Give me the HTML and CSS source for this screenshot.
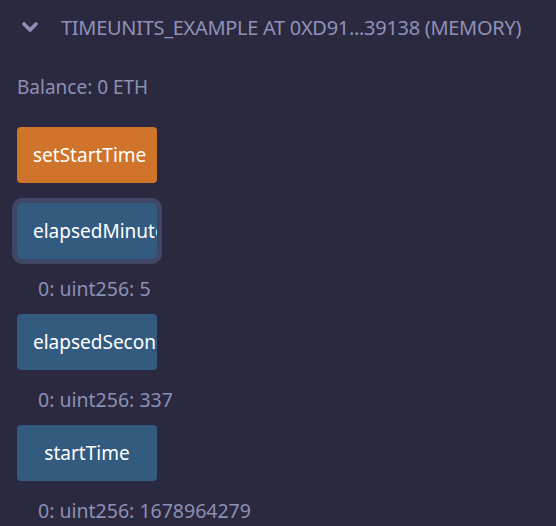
FILE: index.html
```html
<!DOCTYPE html>
<html>
<head>
<meta charset="utf-8">
<link rel="stylesheet" href="styles.css">
</head>
<body>
<div class="panel">
  <div class="header">
    <svg class="chev" width="18" height="14" viewBox="0 0 18 14"><path d="M3 4 L9 10 L15 4" fill="none" stroke="#8e90b8" stroke-width="3.6" stroke-linecap="round" stroke-linejoin="round"/></svg>
    <span class="title">TIMEUNITS_EXAMPLE AT 0XD91...39138 (MEMORY)</span>
  </div>
  <div class="balance">Balance: 0 ETH</div>
  <div class="fn first"><button class="btn orange">setStartTime</button></div>
  <div class="fn after-fn"><button class="btn blue focus">elapsedMinutes</button></div>
  <div class="out">0: uint256: 5</div>
  <div class="fn"><button class="btn blue">elapsedSeconds</button></div>
  <div class="out">0: uint256: 337</div>
  <div class="fn"><button class="btn blue">startTime</button></div>
  <div class="out">0: uint256: 1678964279</div>
</div>
</body>
</html>
```
FILE: styles.css
```css
html, body {
  margin: 0;
  padding: 0;
  background: #2b2940;
  font-family: "Noto Sans", "Open Sans", sans-serif;
}
.panel {
  display: flex;
  flex-direction: column;
  padding: 0 0 0 17px;
}
.header {
  display: flex;
  align-items: center;
  height: 54px;
  gap: 22px;
  padding-left: 4px;
}
.chev { flex: none; }
.title {
  color: #8f91b6;
  font-size: 20px;
  letter-spacing: -0.3px;
  white-space: nowrap;
}
.balance {
  color: #8c90b2;
  font-size: 19px;
  margin-top: 21px;
  height: 24px;
  line-height: 24px;
}
.fn {
  margin-top: 13px;
  display: flex;
}
.fn.first { margin-top: 28px; }
.fn.after-fn { margin-top: 20px; }
.btn {
  width: 140px;
  height: 56px;
  border: none;
  border-radius: 4px;
  color: #ffffff;
  font-family: "Noto Sans", "Open Sans", sans-serif;
  font-size: 19px;
  padding: 0 16px;
  overflow: hidden;
  white-space: nowrap;
  text-align: center;
}
.orange { background: #d0742b; }
.blue { background: #335a7f; }
.focus { box-shadow: 0 0 0 5px #404766; border-radius: 5px; }
.out {
  color: #8c90b2;
  font-size: 19.5px;
  padding-left: 21px;
  margin-top: 18px;
  line-height: 24px;
  white-space: nowrap;
}
```
